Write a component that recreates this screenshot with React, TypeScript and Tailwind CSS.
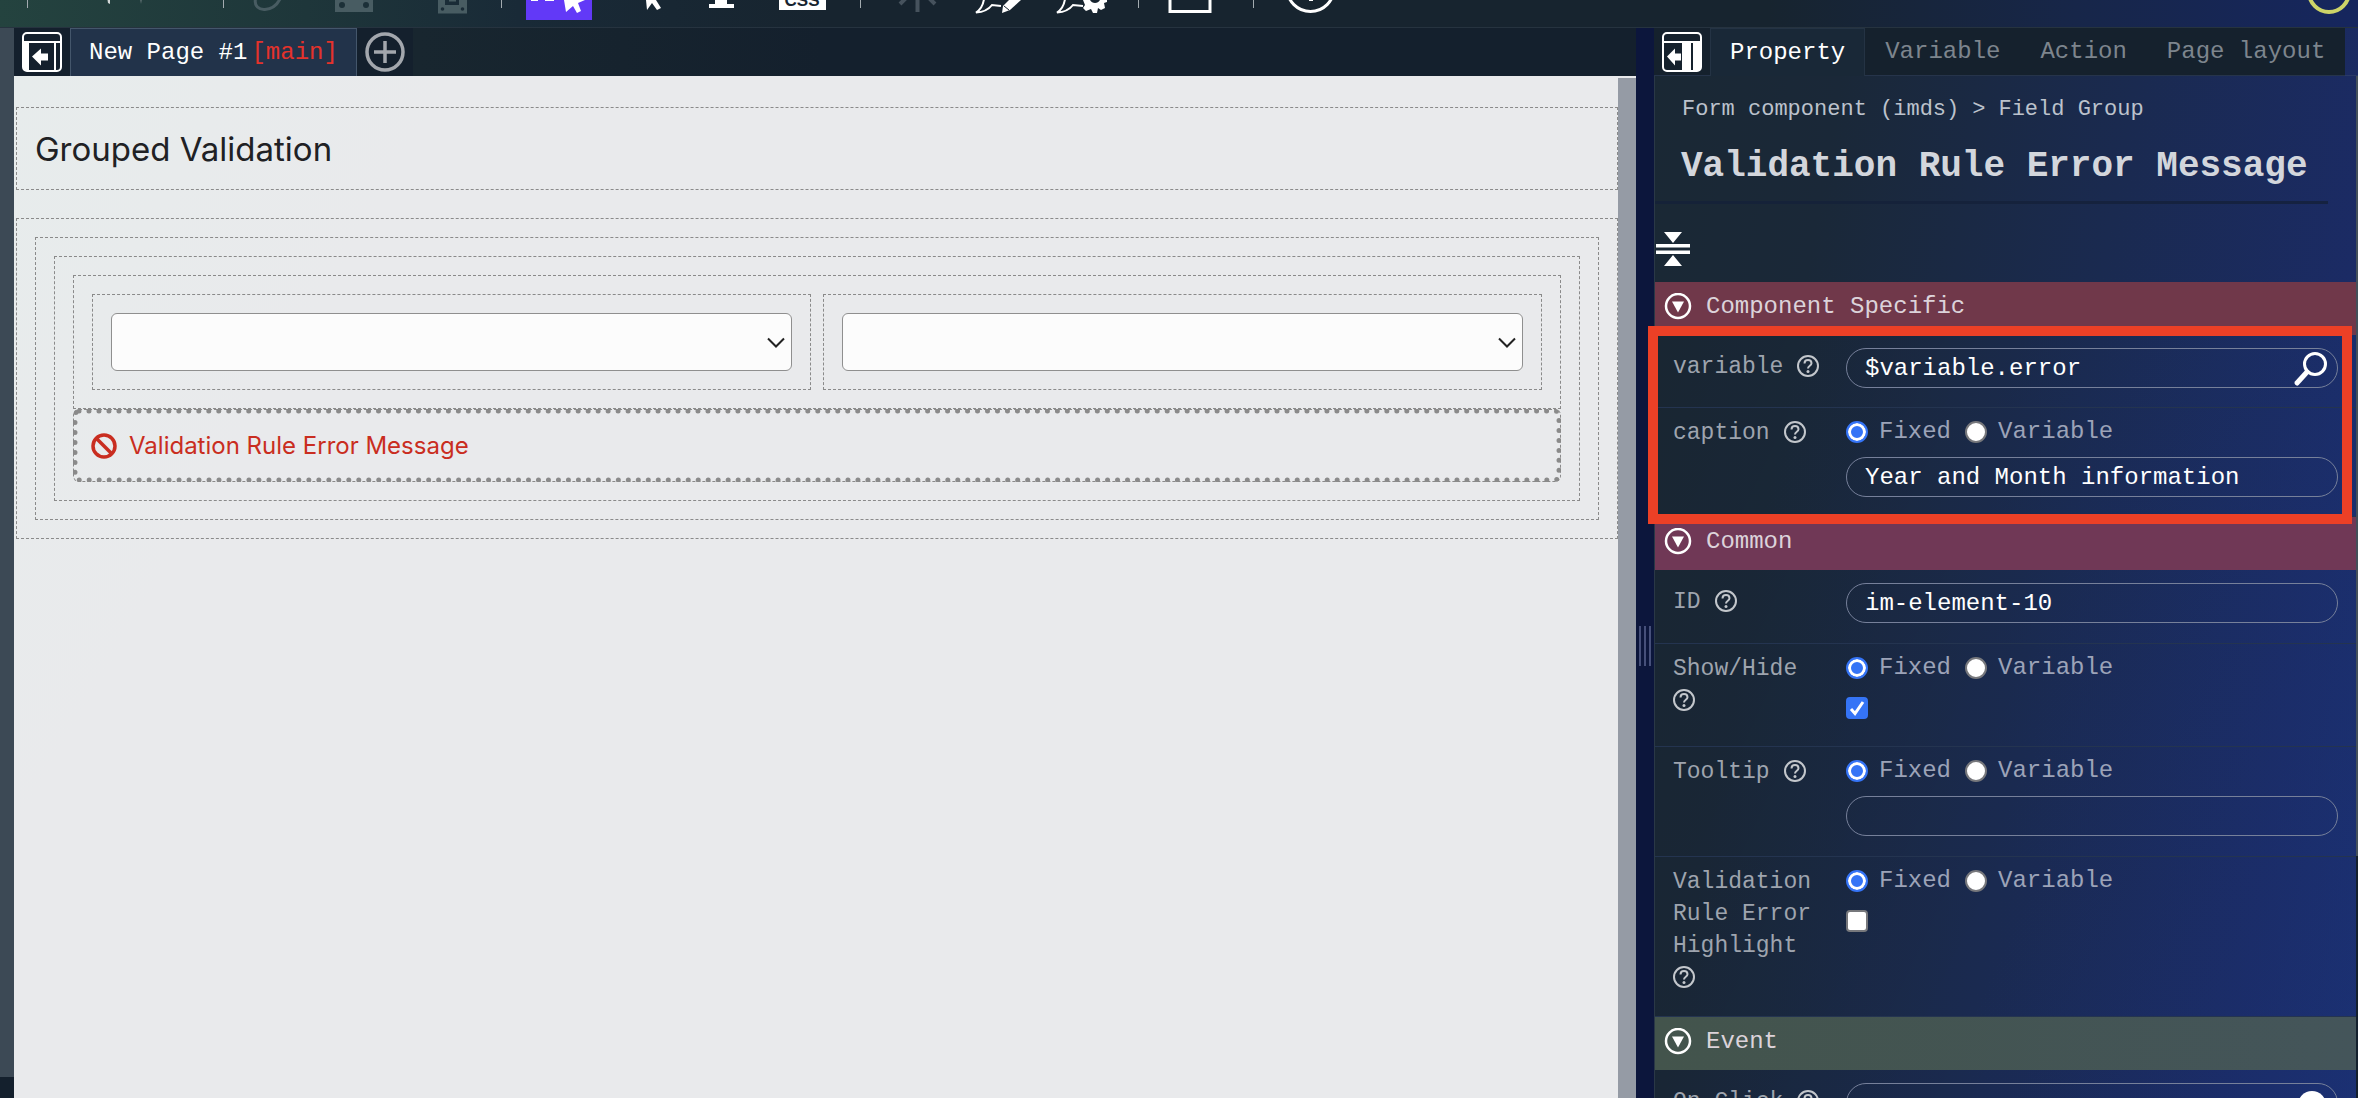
import React, { useId, useState } from "react";

/* ---------- Toolbar ---------- */

function ToolButton({
  label,
  x,
  w,
  active,
  children,
}: {
  label: string;
  x: number;
  w: number;
  active?: boolean;
  children: React.ReactNode;
}) {
  return (
    <button type="button" aria-label={label} aria-pressed={active} className="block shrink-0">
      <svg width={w} height={27} viewBox={`${x} 0 ${w} 27`} fill="none">
        {children}
      </svg>
    </button>
  );
}

function Separator() {
  return <span className="h-2 w-px shrink-0 bg-[#a3abb0]" />;
}

function Toolbar() {
  return (
    <header className="flex h-7 shrink-0 items-start overflow-hidden border-b border-[#26333f] bg-[linear-gradient(90deg,#24433f_0%,#1e363a_13%,#192a37_22%,#17242f_35%,#17242f_75%,#172649_88%,#16265e_100%)] pl-[27px]">
      <Separator />
      <ToolButton label="Undo" x={28} w={97}>
        <path d="M107.500 0h2.500v4l-2-1z" fill="#d3d8d8" />
      </ToolButton>
      <ToolButton label="Redo" x={125} w={98}>
        <path d="M140 0h2l-1 4z" fill="#55686a" />
      </ToolButton>
      <Separator />
      <ToolButton label="Reload" x={224} w={86}>
        <path d="M255.500 -1C254 6 259 10 265 9.500C272 9 277 5 280 -1" stroke="#485c62" strokeWidth="3" />
      </ToolButton>
      <ToolButton label="Save" x={310} w={94}>
        <path d="M335 0h38v12h-38z" fill="#485c62" />
        <circle cx="342" cy="5" r="3" fill="#1c3038" />
        <circle cx="366" cy="5" r="3" fill="#1c3038" />
      </ToolButton>
      <ToolButton label="Save as" x={404} w={97}>
        <path d="M438 0h29v13.500h-29z" fill="#485c62" />
        <path d="M445 0h14v5h-14z" fill="#1a2c37" />
        <path d="M449 0h7v1.500h-7z" fill="#485c62" />
        <circle cx="442.500" cy="9" r="1.800" fill="#1a2c37" />
        <circle cx="462.500" cy="9" r="1.800" fill="#1a2c37" />
      </ToolButton>
      <Separator />
      <ToolButton label="Select element" x={502} w={114} active>
        <path d="M526 0h66v20h-66z" fill="#6239f7" />
        <path d="M531 0h7v1h-7zM545 0h9v1h-9z" fill="#fff" />
        <path d="M564 0h21l-7 3 3 8-4 2-4-7-7 6z" fill="#fff" />
      </ToolButton>
      <ToolButton label="Pointer" x={616} w={72}>
        <path d="M646 0h10l5 8-4 2-5-7-5 7z" fill="#fff" />
      </ToolButton>
      <ToolButton label="Text" x={688} w={70}>
        <path d="M715 0h12v4h7v4h-25v-4h6z" fill="#fff" />
      </ToolButton>
      <ToolButton label="Edit style sheet" x={758} w={102}>
        <path d="M779 0h47v10h-47z" fill="#fff" />
        <text
          x="802"
          y="6"
          textAnchor="middle"
          fontFamily="Liberation Sans, sans-serif"
          fontSize="17"
          fontWeight="700"
          fill="#17242f"
        >
          CSS
        </text>
      </ToolButton>
      <Separator />
      <ToolButton label="Debug" x={861} w={97}>
        <path d="M917.500 0v12M907 -3l-7 7M928 -3l7 7" stroke="#46525d" strokeWidth="4" />
      </ToolButton>
      <ToolButton label="Edit comment" x={958} w={82}>
        <path d="M984 -1C983 6 980 10 976 12.500C984 12 989 9 992 5L1001 6" stroke="#fff" strokeWidth="2" />
        <path d="M1009 0h12l-11 10-8 3 1-7z" fill="#fff" />
        <path d="M1004 6l5 4" stroke="#17242f" strokeWidth="1" />
      </ToolButton>
      <ToolButton label="Comment settings" x={1040} w={98}>
        <path d="M1065 -1C1064 6 1061 10 1057 12.500C1065 12 1070 9 1073 5L1083 6" stroke="#fff" strokeWidth="2" />
        <path d="M1083 0h24v2l-3 1 1 5-4 2-3-2-1 5h-4l-2-4-5 2-3-3 2-3z" fill="#fff" />
        <path d="M1090 0h10c-2 4-8 4-10 0z" fill="#17242f" />
      </ToolButton>
      <Separator />
      <ToolButton label="Window" x={1139} w={114}>
        <path d="M1170 -2V11.500H1210V-2" stroke="#fff" strokeWidth="3" />
      </ToolButton>
      <Separator />
      <ToolButton label="Help" x={1254} w={113}>
        <circle cx="1310.500" cy="-12" r="23.500" stroke="#fff" strokeWidth="3" />
        <path d="M1309 0h4v1h-4z" fill="#fff" />
      </ToolButton>
      <span className="flex-1" />
      <ToolButton label="Status" x={2300} w={58}>
        <circle cx="2329" cy="-8" r="20" stroke="#cdd468" strokeWidth="4" />
      </ToolButton>
    </header>
  );
}

/* ---------- Icons ---------- */

function PanelLeftIcon() {
  return (
    <svg width="42" height="42" viewBox="0 0 42 42" fill="none">
      <rect x="2" y="2" width="38" height="38" rx="4" stroke="#fff" strokeWidth="2" />
      <path d="M2 11h38M34 11v29" stroke="#fff" strokeWidth="2" />
      <path d="M2 11h6v29H4l-2-2z" fill="#fff" />
      <path d="M11 25.500l9-8v5h7v7h-7v5z" fill="#fff" />
    </svg>
  );
}

function PanelRightIcon() {
  return (
    <svg width="42" height="42" viewBox="0 0 42 42" fill="none">
      <rect x="2" y="2" width="38" height="38" rx="4" stroke="#fff" strokeWidth="2" />
      <path d="M2 11h38" stroke="#fff" strokeWidth="2" />
      <path d="M21 11h9v29h-9zM32 11h8v27l-2 2h-6z" fill="#fff" />
      <path d="M6 25.500l8-8v5h6v7h-6v5z" fill="#fff" />
    </svg>
  );
}

function HelpIcon() {
  return (
    <svg width="22" height="22" viewBox="0 0 22 22" fill="none" className="shrink-0">
      <circle cx="11" cy="11" r="10" stroke="#c3c7cc" strokeWidth="2" />
      <path d="M7.500 8.500C7.500 3.800 14.500 4 14.500 8.300C14.500 10.800 11 10.800 11 13.500" stroke="#c3c7cc" strokeWidth="2" />
      <circle cx="11" cy="16.500" r="1.500" fill="#c3c7cc" />
    </svg>
  );
}

function ToggleIcon() {
  return (
    <svg width="28" height="28" viewBox="0 0 28 28" fill="none">
      <circle cx="14" cy="13" r="12" stroke="#fff" strokeWidth="2.500" />
      <path d="M8 8.500h12l-6 11z" fill="#fff" />
    </svg>
  );
}

function SearchIcon() {
  return (
    <svg width="36" height="36" viewBox="0 0 36 36" fill="none">
      <circle cx="22" cy="13" r="10.500" stroke="#fff" strokeWidth="3" />
      <path d="M14 21L4 32" stroke="#fff" strokeWidth="5" strokeLinecap="round" />
    </svg>
  );
}

/* ---------- Page canvas ---------- */

function DropDown({ label }: { label: string }) {
  return (
    <div className="border border-dashed border-[#8a8a8a] p-[18px]">
      <div className="relative">
        <select
          aria-label={label}
          className="block h-[58px] w-full appearance-none rounded-md border border-[#8f8f8f] bg-[#fcfcfc] px-3 text-2xl"
        >
          <option value=""></option>
        </select>
        <svg
          className="pointer-events-none absolute top-6 right-[7px]"
          width="18"
          height="12"
          viewBox="0 0 18 12"
          fill="none"
        >
          <path d="M1 1.500l8 8 8-8" stroke="#222" strokeWidth="2" />
        </svg>
      </div>
    </div>
  );
}

function Canvas() {
  return (
    <div className="flex min-h-0 flex-1 bg-[#e9eaec]">
      <main className="min-w-0 flex-1 bg-[linear-gradient(120deg,#e7ecec_0%,#e9eaec_20%)] pt-[31px] pl-0.5 font-['Inter',sans-serif]">
        <div className="flex h-[83px] items-center border border-dashed border-[#8a8a8a] px-[18px]">
          <h1 className="text-[33px] leading-[44px] text-[#202124]">Grouped Validation</h1>
        </div>
        <div className="mt-7 border border-dashed border-[#8a8a8a] p-[18px]">
          <div className="border border-dashed border-[#8a8a8a] p-[18px]">
            <div className="border border-dashed border-[#8a8a8a] p-[18px]">
              <div className="grid grid-cols-2 gap-3 border border-dashed border-[#8a8a8a] p-[18px]">
                <DropDown label="Year" />
                <DropDown label="Month" />
              </div>
              <div className="flex h-[73px] items-center gap-3 rounded-md border border-dashed border-[#8a8a8a] px-[17px] text-2xl text-[#c92d20] outline-[5px] -outline-offset-[5px] outline-[#8a8a8a] outline-dotted">
                <svg width="26" height="26" viewBox="0 0 26 26" fill="none">
                  <circle cx="13" cy="13" r="11" stroke="#c92d20" strokeWidth="3.500" />
                  <path d="M5 5l16 16" stroke="#c92d20" strokeWidth="3.500" />
                </svg>
                <p>Validation Rule Error Message</p>
              </div>
            </div>
          </div>
        </div>
      </main>
      <div className="mt-0.5 w-[18px] shrink-0 bg-[#959ba5]" />
    </div>
  );
}

function Editor() {
  return (
    <section className="flex min-w-0 flex-1 flex-col">
      <div className="flex h-12 shrink-0 bg-[linear-gradient(90deg,#152331_0%,#18262f_25%,#14202d_50%,#14202d_100%)]">
        <button type="button" aria-label="Collapse left panel" className="flex w-14 items-center justify-center bg-[#14202d]">
          <PanelLeftIcon />
        </button>
        <button
          type="button"
          className="flex items-center gap-1 border-x border-t border-[#44566b] bg-[#22334a] px-[18px] text-2xl text-white"
        >
          <span>New Page #1</span>
          <span className="text-[#e5322b]">[main]</span>
        </button>
        <button type="button" aria-label="Add page" className="flex w-14 items-center justify-center bg-[#14202d]">
          <svg width="40" height="40" viewBox="0 0 40 40" fill="none">
            <circle cx="20" cy="20" r="18" stroke="#a3a7ad" strokeWidth="3.500" />
            <path d="M20 9v22M9 20h22" stroke="#a3a7ad" strokeWidth="3.500" />
          </svg>
        </button>
      </div>
      <Canvas />
    </section>
  );
}

/* ---------- Property panel ---------- */

function Row({
  label,
  htmlFor,
  className,
  labelTop = "pt-[9px]",
  children,
}: {
  label: string;
  htmlFor?: string;
  className: string;
  labelTop?: string;
  children: React.ReactNode;
}) {
  return (
    <div
      className={`flex items-start border-b border-[#243450] bg-[linear-gradient(115deg,rgba(0,0,0,0.06)_0%,rgba(0,0,0,0)_50%,rgba(26,60,130,0.18)_100%)] pr-[18px] pl-[18px] ${className}`}
    >
      <div
        className={`flex w-[173px] shrink-0 flex-wrap items-center gap-x-[14px] pr-6 text-[23px] leading-8 text-[#9ea4ae] ${labelTop}`}
      >
        <label htmlFor={htmlFor}>{label}</label>
        <button type="button" aria-label={`Help for ${label}`} className="flex h-8 items-start pt-1">
          <HelpIcon />
        </button>
      </div>
      <div className="min-w-0 flex-1">{children}</div>
    </div>
  );
}

const inputClass =
  "block h-10 w-full rounded-full border border-[#76809a] bg-transparent px-[18px] text-2xl text-white outline-none";

function ModeRadios({ label }: { label: string }) {
  const name = useId();
  const [mode, setMode] = useState("Fixed");
  return (
    <div role="radiogroup" aria-label={`${label} mode`} className="flex items-center gap-[14px] pt-2">
      {["Fixed", "Variable"].map((m) => (
        <label key={m} className="flex items-center gap-[11px] text-2xl leading-8 text-[#9ca3b8]">
          <input
            type="radio"
            name={name}
            checked={mode === m}
            onChange={() => setMode(m)}
            className="size-[22px] appearance-none rounded-full border-2 border-[#77787c] bg-white checked:border-[#3574f6] checked:bg-[#3574f6] checked:shadow-[inset_0_0_0_3px_#fff]"
          />
          {m}
        </label>
      ))}
    </div>
  );
}

function CheckBox({ id, initial }: { id: string; initial: boolean }) {
  const [on, setOn] = useState(initial);
  return (
    <span className="relative mt-[13px] block size-[22px]">
      <input
        id={id}
        type="checkbox"
        checked={on}
        onChange={() => setOn(!on)}
        className="block size-[22px] appearance-none rounded-[4px] border-2 border-[#77787c] bg-white checked:border-[#3574f6] checked:bg-[#3574f6]"
      />
      {on && (
        <svg className="pointer-events-none absolute inset-0" width="22" height="22" viewBox="0 0 22 22" fill="none">
          <path d="M5 12l4 4.500L17 5" stroke="#fff" strokeWidth="3" />
        </svg>
      )}
    </span>
  );
}

function SectionHeader({ title, tone }: { title: string; tone: string }) {
  return (
    <h3 className={`flex h-[53px] shrink-0 items-center pb-[3px] pl-[9px] text-2xl text-[#dcd3da] ${tone}`}>
      <button type="button" className="flex items-center gap-[14px]">
        <ToggleIcon />
        {title}
      </button>
    </h3>
  );
}

const tabs = ["Variable", "Action", "Page layout"];

function PropertyPanel() {
  return (
    <aside className="flex w-[704px] shrink-0 flex-col bg-[linear-gradient(100deg,#1a2834_0%,#1a2838_22%,#1a2a50_55%,#1b2b66_85%,#1b2e70_100%)]">
      <div className="flex h-12 shrink-0">
        <div className="flex border-b border-[#26344a] bg-[#15212d]">
          <button type="button" aria-label="Collapse right panel" className="flex w-14 items-center justify-center">
            <PanelRightIcon />
          </button>
        </div>
        <button type="button" className="border-x border-t border-[#243344] bg-[#192837] px-[19px] text-2xl text-white">
          Property
        </button>
        <div className="flex border-b border-[#26344a] bg-[#15212d]">
          {tabs.map((t) => (
            <button key={t} type="button" className="px-5 text-2xl text-[#7d858d]">
              {t}
            </button>
          ))}
        </div>
        <div className="flex-1 border-b border-[#2a3a66]" />
      </div>

      <div className="flex min-h-0 flex-1">
        <div className="min-w-0 flex-1 border-l border-[#2a3846]">
          <nav aria-label="Breadcrumb" className="flex gap-[13px] px-[27px] pt-[18px] text-[22px] leading-8 text-[#bcc2cc]">
            <a href="#form">Form component (imds)</a>
            <span>&gt;</span>
            <a href="#group">Field Group</a>
          </nav>
          <h2 className="mt-4 mr-7 h-[62px] border-b-[3px] border-[#14203a]/80 pl-[26px] text-4xl leading-[50px] font-bold whitespace-nowrap text-[#d3d6dc]">
            Validation Rule Error Message
          </h2>
          <button type="button" aria-label="Collapse all sections" className="mt-7 mb-4 block">
            <svg width="36" height="34" viewBox="0 0 36 34" fill="none">
              <path d="M9 0h18l-9 11zM9 34h18l-9-11zM1 12h34v3.500H1zM1 18.500h34v3.500H1z" fill="#fff" />
            </svg>
          </button>

          <SectionHeader title="Component Specific" tone="bg-[#70384a]" />
          <div className="relative">
            <Row label="variable" htmlFor="variable" className="h-[73px]" labelTop="pt-4">
              <div className="relative mt-[13px]">
                <input id="variable" defaultValue="$variable.error" className={inputClass} />
                <button type="button" aria-label="Search variable" className="absolute top-[3px] right-[9px]">
                  <SearchIcon />
                </button>
              </div>
            </Row>
            <Row label="caption" htmlFor="caption" className="h-[109px]">
              <ModeRadios label="caption" />
              <input id="caption" defaultValue="Year and Month information" className={`mt-[9px] ${inputClass}`} />
            </Row>
            <div className="pointer-events-none absolute -top-[9px] right-1 -bottom-[7px] -left-[7px] z-10 border-[10px] border-[#ec4026]" />
          </div>

          <SectionHeader title="Common" tone="bg-[#703856]" />
          <Row label="ID" htmlFor="element-id" className="h-[74px]" labelTop="pt-4">
            <input id="element-id" defaultValue="im-element-10" className={`mt-[13px] ${inputClass}`} />
          </Row>
          <Row label="Show/Hide" htmlFor="show" className="h-[103px]">
            <ModeRadios label="Show/Hide" />
            <CheckBox id="show" initial />
          </Row>
          <Row label="Tooltip" htmlFor="tooltip" className="h-[110px]">
            <ModeRadios label="Tooltip" />
            <input id="tooltip" className={`mt-[9px] ${inputClass}`} />
          </Row>
          <Row label="Validation Rule Error Highlight" htmlFor="highlight" className="h-40">
            <ModeRadios label="Validation Rule Error Highlight" />
            <CheckBox id="highlight" initial={false} />
          </Row>

          <SectionHeader title="Event" tone="bg-[linear-gradient(90deg,#43544c,#44555a)]" />
          <Row label="On Click" htmlFor="on-click" className="h-[74px]" labelTop="pt-4">
            <div className="relative mt-[13px]">
              <input id="on-click" className={inputClass} />
              <button
                type="button"
                aria-label="Edit On Click action"
                className="absolute top-2 right-3 size-7 rounded-full bg-white"
              />
            </div>
          </Row>
        </div>
        <div className="flex w-0.5 shrink-0 flex-col">
          <div className="h-[780px] bg-[#44505a]" />
          <div className="flex-1 bg-[#14202d]" />
        </div>
      </div>
    </aside>
  );
}

export default function App() {
  return (
    <div className="flex h-screen flex-col overflow-hidden bg-[#14202d] font-['Liberation_Mono',monospace]">
      <Toolbar />
      <div className="flex min-h-0 flex-1">
        <div className="flex w-[14px] shrink-0 flex-col bg-[#14202d] pb-[21px]">
          <div className="flex-1 bg-[#3c4955]" />
        </div>
        <Editor />
        <div
          role="separator"
          aria-orientation="vertical"
          className="flex w-[18px] shrink-0 items-center justify-center gap-[3px] bg-[#0c163c] pt-[165px]"
        >
          <span className="h-10 w-0.5 bg-[#46507a]" />
          <span className="h-10 w-0.5 bg-[#46507a]" />
          <span className="h-10 w-0.5 bg-[#46507a]" />
        </div>
        <PropertyPanel />
      </div>
    </div>
  );
}
